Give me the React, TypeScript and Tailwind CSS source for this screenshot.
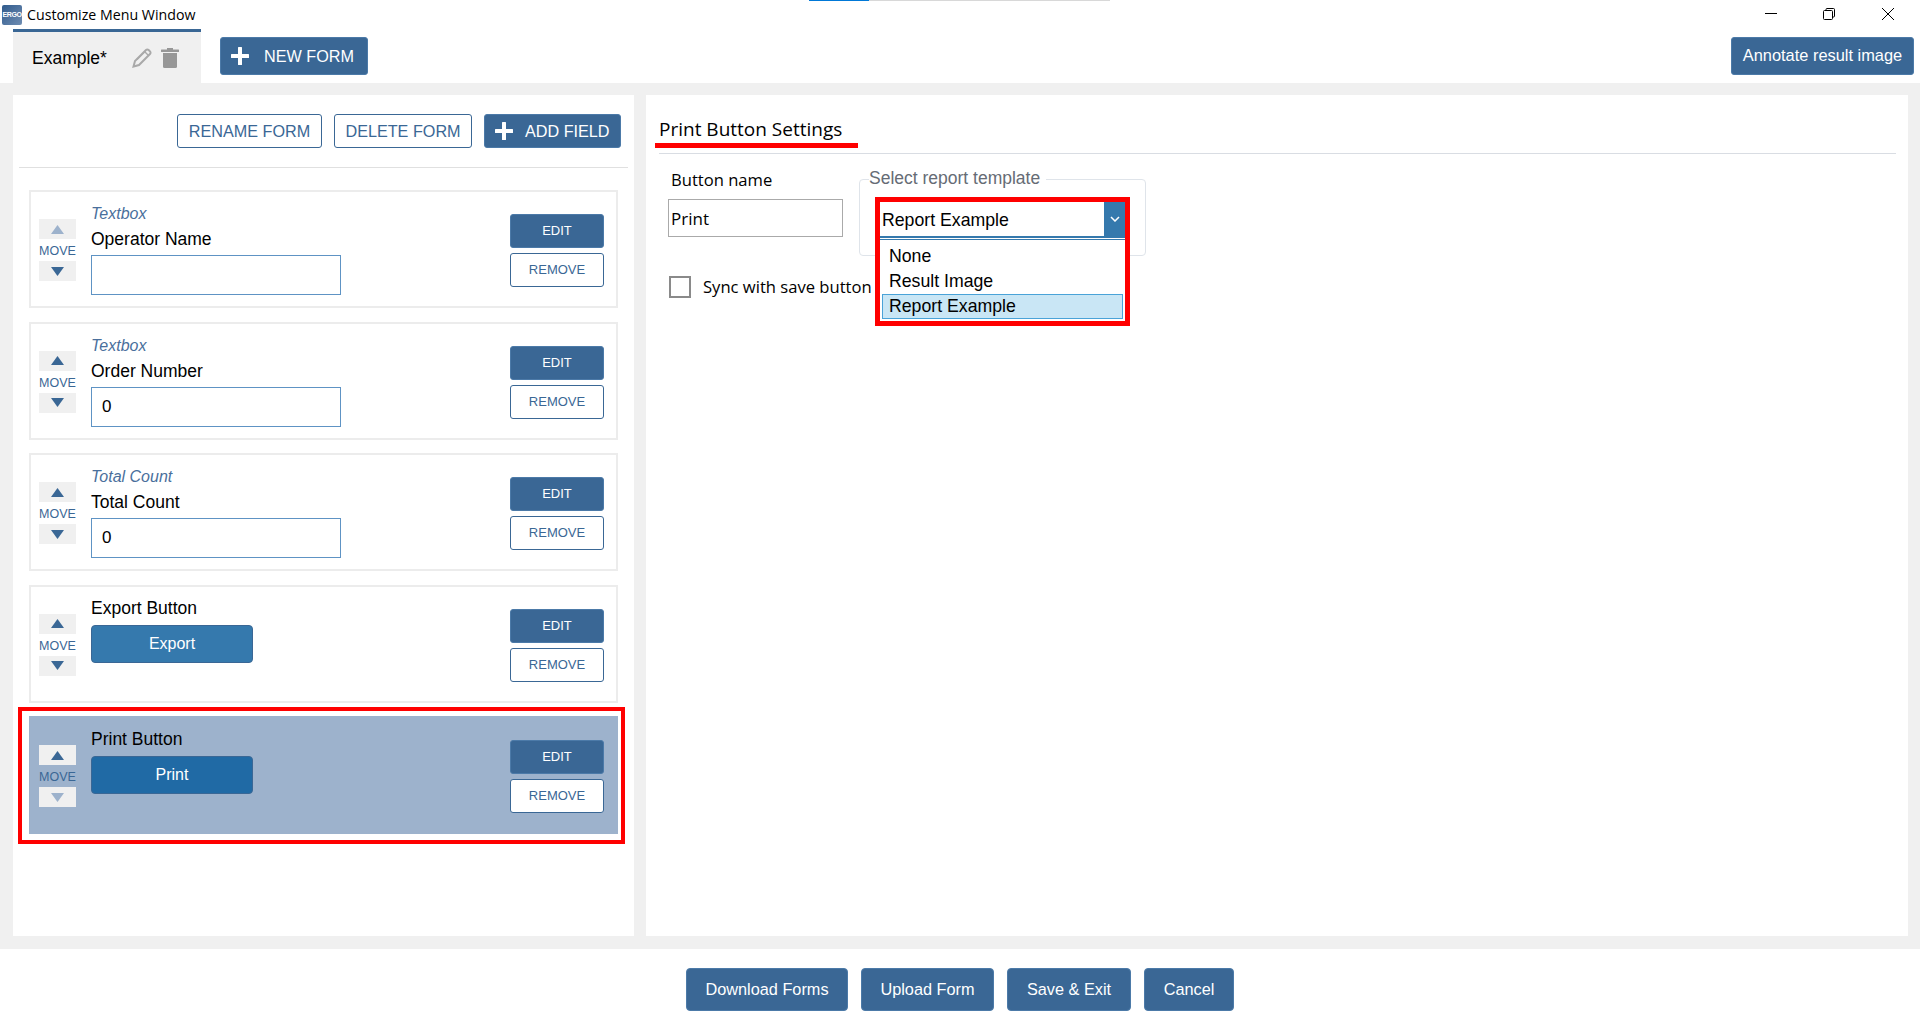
import React from "react";

const sans = "font-['Liberation_Sans',Arial,sans-serif]";
const open = "font-['Open_Sans','Noto_Sans',sans-serif]";

function Plus({ className }: { className: string }) {
  return (
    <svg viewBox="0 0 18 18" className={className} fill="#fff">
      <rect x="7" y="0" width="4" height="18" rx="0.5" />
      <rect x="0" y="7" width="18" height="4" rx="0.5" />
    </svg>
  );
}

function Arrow({ dir, faded }: { dir: "up" | "down"; faded?: boolean }) {
  return (
    <div className="w-[37px] h-[20px] bg-[#f0f0f0] flex items-center justify-center">
      <svg viewBox="0 0 13 9" className="w-[13px] h-[9px]" fill={faded ? "#9db2cc" : "#3a6795"}>
        <polygon points={dir === "up" ? "6.5,0 13,9 0,9" : "0,0 13,0 6.5,9"} />
      </svg>
    </div>
  );
}

function Card({
  type,
  name,
  value,
  button,
  selected,
  upFaded,
  downFaded,
}: {
  type?: string;
  name: string;
  value?: string;
  button?: string;
  selected?: boolean;
  upFaded?: boolean;
  downFaded?: boolean;
}) {
  return (
    <div
      className={`relative h-[118px] mx-[16px] border-2 flex ${
        selected ? "bg-[#9db2cc] border-[#9db2cc]" : "bg-white border-[#ececec]"
      }`}
    >
      <div className="w-[37px] ml-[8px] mt-[27px] flex flex-col items-center">
        <Arrow dir="up" faded={upFaded} />
        <div className={`h-[22px] pt-[3px] flex items-center text-[12.5px] text-[#3a6795] ${sans}`}>MOVE</div>
        <Arrow dir="down" faded={downFaded} />
      </div>
      <div className={`ml-[15px] flex-1 ${type ? "pt-[11px]" : "pt-[8px]"} ${sans}`}>
        {type && <div className="h-[23px] leading-[22px] text-[16px] italic text-[#4a6f9c]">{type}</div>}
        <div className="h-[26px] leading-[26px] text-[17.5px] text-black">{name}</div>
        {button ? (
          <div
            className={`mt-[4px] w-[162px] h-[38px] rounded-[4px] border border-[#3a6795] text-white text-[16px] flex items-center justify-center ${
              selected ? "bg-[#206aa5]" : "bg-[#3579ad]"
            }`}
          >
            {button}
          </div>
        ) : (
          <div className="mt-[3px] w-[250px] h-[40px] border border-[#5e93c4] bg-white pl-[10px] flex items-center text-[17px] text-black">
            {value}
          </div>
        )}
      </div>
      <div className={`w-[94px] mr-[12px] mt-[22px] flex flex-col gap-[5px] ${sans}`}>
        <div className="h-[34px] rounded-[3px] bg-[#3a6795] border border-[#4c7aa8] text-white text-[13px] flex items-center justify-center">
          EDIT
        </div>
        <div className="h-[34px] rounded-[3px] bg-white border border-[#3a6795] text-[#3a6795] text-[13px] flex items-center justify-center">
          REMOVE
        </div>
      </div>
      {selected && (
        <div className="absolute left-[-13px] right-[-9px] top-[-11px] bottom-[-12px] border-[4px] border-[#ff0000] pointer-events-none" />
      )}
    </div>
  );
}

function FooterButton({ label, w }: { label: string; w: string }) {
  return (
    <div
      className={`${w} h-[43px] rounded-[4px] bg-[#3a6795] border border-[#4c7aa8] text-white text-[16.3px] flex items-center justify-center ${sans}`}
    >
      {label}
    </div>
  );
}

export default function App() {
  return (
    <div className={`w-[1920px] h-[1025px] bg-white flex flex-col overflow-hidden ${sans}`}>
      {/* Title bar */}
      <div className="relative h-[29px] flex items-center shrink-0">
        <div className="ml-[2px] w-[20px] h-[20px] rounded-[2px] bg-gradient-to-br from-[#2f5a8c] to-[#6f8db2] flex items-center justify-center overflow-hidden">
          <span className="text-[7px] leading-none font-bold text-white tracking-tighter">ERGO</span>
        </div>
        <div className={`ml-[5px] text-[14.2px] text-black ${open}`}>Customize Menu Window</div>
        <div className="absolute top-0 left-[809px] h-[1px] w-[60px] bg-[#0078d7]" />
        <div className="absolute top-0 left-[869px] h-[1px] w-[241px] bg-[#d8d8d8]" />
        <div className="ml-auto flex items-center mb-[2px]">
          <svg viewBox="0 0 12 12" className="w-[12px] h-[12px] mr-[46px]" stroke="#000" fill="none">
            <path d="M0 5.5H12" />
          </svg>
          <svg viewBox="0 0 12 12" className="w-[12px] h-[12px] mr-[47px]" stroke="#000" fill="none">
            <rect x="0.5" y="2.5" width="9" height="9" rx="1" />
            <path d="M3 2.5V1.5a1 1 0 0 1 1-1h6.5a1 1 0 0 1 1 1V8a1 1 0 0 1-1 1H9.5" />
          </svg>
          <svg viewBox="0 0 12 12" className="w-[12px] h-[12px] mr-[26px]" stroke="#000" fill="none">
            <path d="M0 0L12 12M12 0L0 12" />
          </svg>
        </div>
      </div>

      {/* Tab row */}
      <div className="h-[54px] flex shrink-0">
        <div className="ml-[13px] w-[188px] bg-[#f0f0f0] border-t-[3px] border-[#3a6795] flex items-center">
          <span className="ml-[19px] mt-[2px] text-[17.5px] text-black w-[80px]">Example*</span>
          <svg viewBox="0 0 20 20" className="ml-[20px] w-[20px] h-[20px]" fill="none" stroke="#a9a9a9" strokeWidth="2">
            <path d="M1.5 18.5l1.5-5.5L14 2a1.8 1.8 0 0 1 2.6 0l1.4 1.4a1.8 1.8 0 0 1 0 2.6L7 17z" />
            <path d="M12.5 3.5l4 4M5 11.5L13.5 3" strokeWidth="1.4" />
          </svg>
          <svg viewBox="0 0 18 20" className="ml-[9px] w-[18px] h-[20px]" fill="#979797">
            <rect x="0" y="1.5" width="18" height="2.5" rx="0.5" />
            <rect x="6" y="0" width="6" height="2" />
            <path d="M2 5h14v13.5a1.5 1.5 0 0 1-1.5 1.5h-11A1.5 1.5 0 0 1 2 18.5z" />
          </svg>
        </div>
        <div className="ml-[19px] mt-[8px] w-[148px] h-[38px] rounded-[3px] bg-[#3a6795] border border-[#4c7aa8] text-white text-[16.2px] flex items-center">
          <Plus className="ml-[10px] w-[18px] h-[18px]" />
          <span className="ml-[15px]">NEW FORM</span>
        </div>
        <div className="ml-auto mr-[6px] mt-[8px] w-[183px] h-[38px] pb-[1px] rounded-[3px] bg-[#3a6795] border border-[#4c7aa8] text-white text-[16.4px] flex items-center justify-center">
          Annotate result image
        </div>
      </div>

      {/* Main */}
      <div className="flex-1 bg-[#f0f0f0] pt-[12px] pb-[13px] pl-[13px] pr-[12px] flex gap-[12px] min-h-0">
        {/* Left panel */}
        <div className="w-[621px] bg-white flex flex-col">
          <div className="mt-[19px] mr-[13px] flex justify-end gap-[12px] text-[16.2px] text-[#3a6795]">
            <div className="w-[145px] h-[34px] rounded-[3px] border border-[#3a6795] flex items-center justify-center">RENAME FORM</div>
            <div className="w-[138px] h-[34px] rounded-[3px] border border-[#3a6795] flex items-center justify-center">DELETE FORM</div>
            <div className="w-[137px] h-[34px] rounded-[3px] bg-[#3a6795] border border-[#4c7aa8] text-white flex items-center">
              <Plus className="ml-[10px] w-[18px] h-[18px]" />
              <span className="ml-[12px]">ADD FIELD</span>
            </div>
          </div>
          <div className="mt-[19px] mx-[6px] h-[1px] bg-[#e0e0e0]" />
          <div className="mt-[22px] flex flex-col gap-[13.5px]">
            <Card type="Textbox" name="Operator Name" upFaded />
            <Card type="Textbox" name="Order Number" value="0" />
            <Card type="Total Count" name="Total Count" value="0" />
            <Card name="Export Button" button="Export" />
            <Card name="Print Button" button="Print" selected downFaded />
          </div>
        </div>

        {/* Right panel */}
        <div className="relative flex-1 bg-white">
          <div className={`mt-[21px] ml-[13px] h-[26px] leading-[26px] text-[19px] text-black ${open}`}>
            Print Button Settings
          </div>
          <div className="mt-[11px] ml-[13px] mr-[12px] h-[1px] bg-[#d9dde3] relative">
            <div className="absolute left-[-4px] top-[-10px] w-[203px] h-[5px] bg-[#ff0000]" />
          </div>
          <div className="flex ml-[22px] mt-[15px]">
            <div className="w-[175px]">
              <div className={`ml-[3px] h-[30px] mt-[-4px] mb-[4px] leading-[30px] text-[16.6px] text-black ${open}`}>Button name</div>
              <div className={`h-[38px] border border-[#aaaaaa] pl-[2px] pt-[1px] flex items-center text-[17px] text-black ${open}`}>
                Print
              </div>
            </div>
            <div className="relative ml-[16px] mt-[10px] w-[287px] h-[77px] border border-[#dfe4ea] rounded-[4px]">
              <span className="absolute left-[9px] top-[-13px] bg-white pr-[6px] text-[17.5px] leading-[22px] text-[#666c75]">
                Select report template
              </span>
            </div>
          </div>
          <div className="flex items-center ml-[23px] mt-[18px]">
            <div className="w-[22px] h-[22px] border-[2px] border-[#8a8a8a] bg-white" />
            <span className={`ml-[12px] pt-[1px] text-[16.6px] text-black ${open}`}>Sync with save button</span>
          </div>

          {/* Open dropdown with annotation */}
          <div className="absolute left-[229px] top-[102px] w-[255px] h-[129px] border-[5px] border-[#ff0000] bg-white flex flex-col">
            <div className="h-[36px] shrink-0 flex border-b-[2px] border-[#3579ad]">
              <span className="flex-1 pl-[2px] pt-[2px] flex items-center text-[17.7px] text-black">Report Example</span>
              <div className="w-[21px] bg-[#3579ad] flex items-center justify-center">
                <svg viewBox="0 0 10 6" className="w-[10px] h-[6px]" fill="none" stroke="#fff" strokeWidth="1.5">
                  <path d="M1 1l4 4 4-4" />
                </svg>
              </div>
            </div>
            <div className="border-t border-[#3579ad] mt-[1px]" />
            <div className="pl-[9px] h-[25px] mt-[4px] flex items-center text-[17.7px] text-black">None</div>
            <div className="pl-[9px] h-[25px] flex items-center text-[17.7px] text-black">Result Image</div>
            <div className="mx-[2px] pl-[6px] h-[25px] bg-[#c9e6f5] border border-[#4aa3d8] flex items-center text-[17.7px] text-black">
              Report Example
            </div>
          </div>
        </div>
      </div>

      {/* Footer */}
      <div className="h-[76px] shrink-0 flex justify-center gap-[13px] pt-[19px]">
        <FooterButton label="Download Forms" w="w-[162px]" />
        <FooterButton label="Upload Form" w="w-[133px]" />
        <FooterButton label="Save & Exit" w="w-[124px]" />
        <FooterButton label="Cancel" w="w-[90px]" />
      </div>
    </div>
  );
}
